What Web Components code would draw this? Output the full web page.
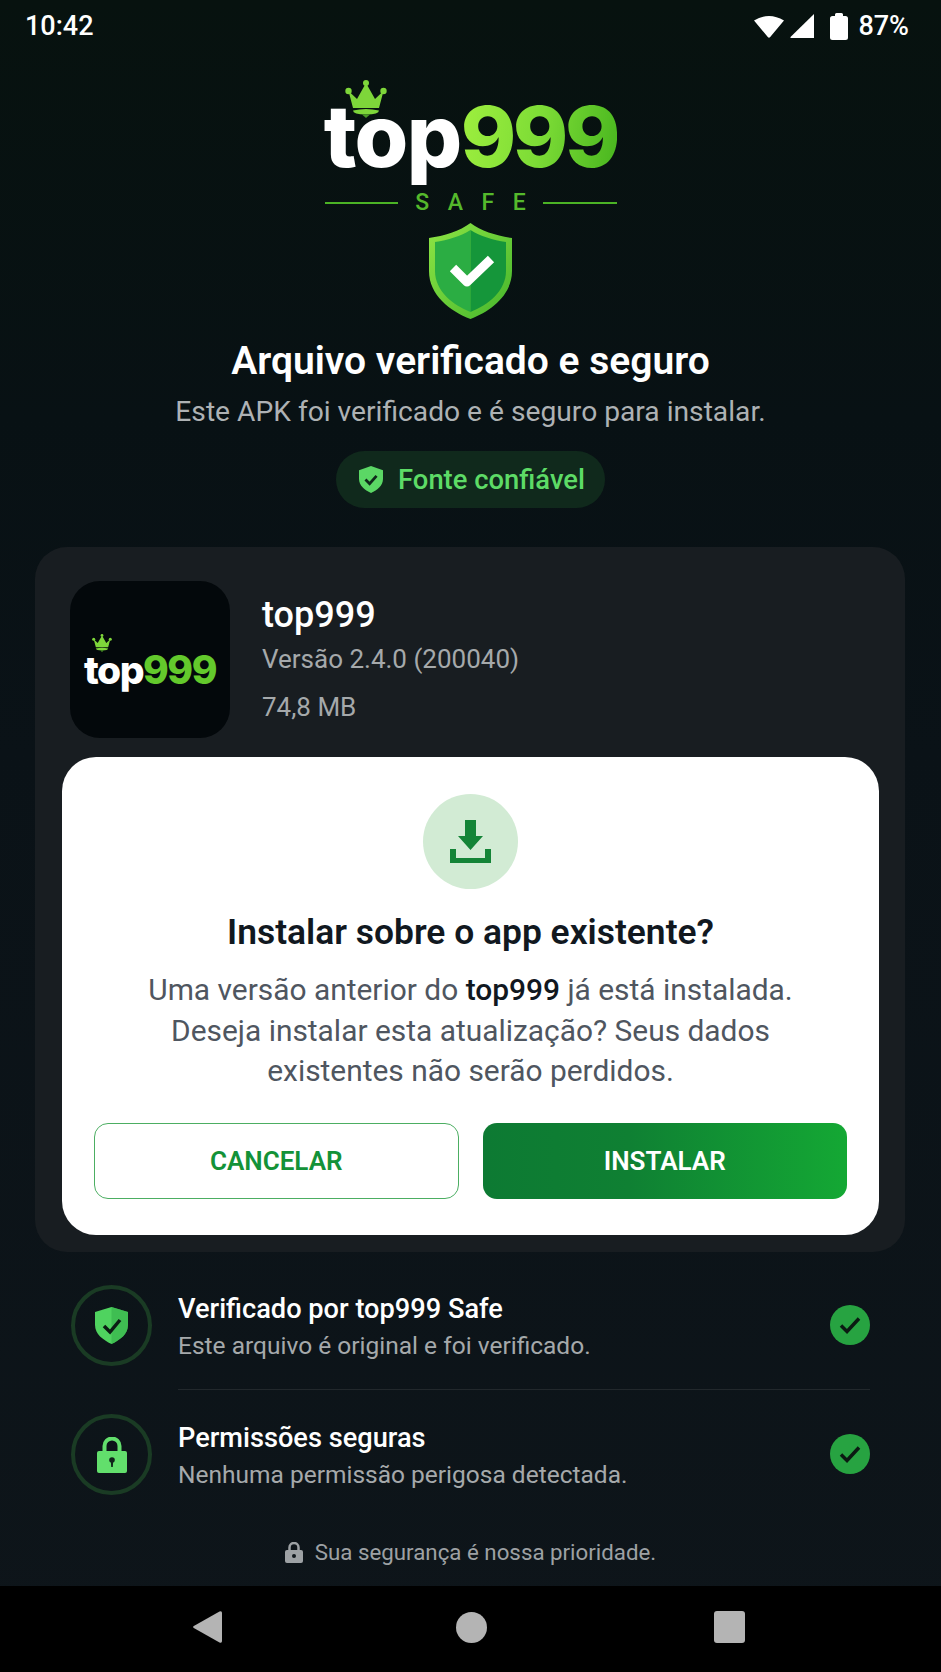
<!DOCTYPE html>
<html lang="pt-BR">
<head>
<meta charset="utf-8">
<title>top999 Safe</title>
<style>
  html, body { margin: 0; padding: 0; background: #0b1216; }
  body { font-family: Roboto, "Noto Sans", sans-serif; }
</style>
</head>
<body>
<install-screen>
  <status-bar time="10:42" level="87%"></status-bar>
  <brand-logo></brand-logo>
  <verified-head heading="Arquivo verificado e seguro" text="Este APK foi verificado e é seguro para instalar."></verified-head>
  <trust-pill>Fonte confiável</trust-pill>
  <app-card name="top999" version="Versão 2.4.0 (200040)" size="74,8 MB">
    <install-dialog heading="Instalar sobre o app existente?">
      Uma versão anterior do <b>top999</b> já está instalada.<br>Deseja instalar esta atualização? Seus dados<br>existentes não serão perdidos.
    </install-dialog>
  </app-card>
  <check-row icon="shield" heading="Verificado por top999 Safe" text="Este arquivo é original e foi verificado." first></check-row>
  <check-row icon="lock" heading="Permissões seguras" text="Nenhuma permissão perigosa detectada." last></check-row>
  <safe-note>Sua segurança é nossa prioridade.</safe-note>
  <nav-bar></nav-bar>
</install-screen>

<script>
const CROWN = `<svg viewBox="0 0 42 38" width="100%" height="100%" fill="#7ed63a" style="display:block">
  <circle cx="3.5" cy="11" r="3.2"/><circle cx="21" cy="3" r="3"/><circle cx="38.5" cy="11" r="3.2"/>
  <path d="M3.5 11 L12 19 L21 3 L30 19 L38.5 11 L34 28 H8 Z"/>
  <path d="M8 30.5 Q21 27.5 34 30.5 Q34 34.5 21 34.5 Q8 34.5 8 30.5 Z"/>
  <path d="M17 34.5 H25 L21 38 Z" fill="#4a9a25"/>
</svg>`;

class InstallScreen extends HTMLElement {
  connectedCallback() {
    this.attachShadow({ mode: 'open' }).innerHTML = `
    <style>
      :host {
        display: flex;
        flex-direction: column;
        height: 1672px;
        width: 941px;
        overflow: hidden;
        color: #fff;
        font-family: Roboto, "Noto Sans", sans-serif;
        background: linear-gradient(180deg, #07120f 0%, #081114 25%, #0a1217 45%, #0e151a 100%);
      }
    </style>
    <slot></slot>`;
  }
}

class StatusBar extends HTMLElement {
  connectedCallback() {
    this.attachShadow({ mode: 'open' }).innerHTML = `
    <style>
      :host { display: flex; align-items: center; justify-content: space-between; height: 52px; padding: 0 32px 0 25px; font-size: 27px; font-weight: 500; color: #fff; }
      .right { display: flex; align-items: center; }
      svg { display: block; }
      .pct { margin-left: 10px; }
    </style>
    <span>${this.getAttribute('time')}</span>
    <div class="right">
      <svg width="30" height="24" viewBox="0 0 30 24" fill="#fff"><path d="M0 6.500 Q15 -2.500 30 6.500 L16.200 23 Q15 24.500 13.800 23 Z"/></svg>
      <svg width="24" height="24" viewBox="0 0 24 24" fill="#fff" style="margin-left:6px"><path d="M24 0 V24 H1 Q0 24 .5 23 Z"/></svg>
      <svg width="18" height="27" viewBox="0 0 18 27" fill="#fff" style="margin-left:16px"><path d="M5 3 V1.500 Q5 0 6.500 0 H11.500 Q13 0 13 1.500 V3 H15.500 Q18 3 18 5.500 V24.500 Q18 27 15.500 27 H2.500 Q0 27 0 24.500 V5.500 Q0 3 2.500 3 Z"/></svg>
      <span class="pct">${this.getAttribute('level')}</span>
    </div>`;
  }
}

class BrandLogo extends HTMLElement {
  connectedCallback() {
    this.attachShadow({ mode: 'open' }).innerHTML = `
    <style>
      :host { display: flex; flex-direction: column; align-items: center; }
      .word { position: relative; margin-top: 28px; height: 112px; display: flex; align-items: baseline; font-family: Inter, Roboto, sans-serif; font-weight: 800; font-size: 87px; letter-spacing: -1.600px; line-height: 112px; color: #fff; }
      .g { font-size: 84px; letter-spacing: -3.400px; background: linear-gradient(100deg, #a0f03f 0%, #7ddc36 50%, #46b41e 100%); -webkit-background-clip: text; background-clip: text; color: transparent; }
      .crown { position: absolute; left: 21px; top: 0; width: 42px; height: 38px; }
      .tag { display: flex; align-items: center; justify-content: center; gap: 17px; width: 292px; margin-top: -1px; color: #55b92c; font-size: 23px; font-weight: 500; line-height: 24px; }
      .tag i { flex: 1; height: 2px; background: #4bb325; }
      .tag span { letter-spacing: 18.500px; margin-right: -18.500px; }
      .shield { display: block; margin-top: 8px; }
    </style>
    <div class="word"><span>top</span><span class="g">999</span><div class="crown">${CROWN}</div></div>
    <div class="tag"><i></i><span>SAFE</span><i></i></div>
    <svg class="shield" width="83" height="96" viewBox="0 0 83 96">
      <defs>
        <linearGradient id="rim" x1="0" y1="0" x2="1" y2="1"><stop offset="0" stop-color="#8ee544"/><stop offset="1" stop-color="#45b52c"/></linearGradient>
      </defs>
      <path fill="url(#rim)" d="M41.5 0 C52 8 68 13 83 15 V48 C83 72 62 88 41.500 96 C21 88 0 72 0 48 V15 C15 13 31 8 41.500 0 Z"/>
      <path fill="#2bad43" d="M41.500 7 C32 13 19 17 6 19 V48 C6 68 24 82 41.500 89 Z"/>
      <path fill="#15963a" d="M41.500 7 C51 13 64 17 77 19 V48 C77 68 59 82 41.500 89 Z"/>
      <path fill="none" stroke="#fff" stroke-width="9" stroke-linejoin="round" d="M24 45 L38 59 L62 36"/>
    </svg>`;
  }
}

class VerifiedHead extends HTMLElement {
  connectedCallback() {
    this.attachShadow({ mode: 'open' }).innerHTML = `
    <style>
      :host { display: block; text-align: center; margin-top: 19px; }
      h1 { margin: 0; font-size: 39px; line-height: 46px; font-weight: 600; color: #fff; }
      p { margin: 10px 0 0; font-size: 28.200px; line-height: 36px; color: #aeb2b4; }
    </style>
    <h1>${this.getAttribute('heading')}</h1>
    <p>${this.getAttribute('text')}</p>`;
  }
}

class TrustPill extends HTMLElement {
  connectedCallback() {
    this.attachShadow({ mode: 'open' }).innerHTML = `
    <style>
      :host { display: flex; align-items: center; align-self: center; gap: 15px; height: 57px; box-sizing: border-box; margin-top: 21px; padding: 0 20px 0 23px; border-radius: 29px; background: #10291c; color: #5ddb66; font-size: 27.400px; font-weight: 500; }
      svg { display: block; }
    </style>
    <svg width="24" height="27" viewBox="0 0 26 29">
      <path fill="#5bd765" d="M13 0 L26 4.500 V14 C26 21 20 26 13 29 C6 26 0 21 0 14 V4.500 Z"/>
      <path fill="none" stroke="#10291c" stroke-width="3" d="M7 14.500 L11.500 19 L19 10.500"/>
    </svg>
    <span><slot></slot></span>`;
  }
}

class AppCard extends HTMLElement {
  connectedCallback() {
    this.attachShadow({ mode: 'open' }).innerHTML = `
    <style>
      :host { display: block; flex: none; margin: 39px 36px 0 35px; padding: 34px 26px 17px 27px; border-radius: 32px; background: #181d21; }
      .top { display: flex; align-items: stretch; padding-left: 8px; }
      .icon { position: relative; flex: none; width: 160px; height: 157px; border-radius: 30px; background: #03080b; display: flex; align-items: center; justify-content: center; font-family: Inter, Roboto, sans-serif; font-weight: 800; font-size: 39px; letter-spacing: -1.500px; padding-top: 20px; box-sizing: border-box; color: #fff; }
      .icon b { font-weight: 800; color: #63c92c; }
      .crown { position: absolute; left: 22px; top: 53px; width: 20px; height: 18px; }
      .meta { margin-left: 32px; }
      h2 { margin: 15px 0 0; font-size: 36px; line-height: 39px; font-weight: 500; color: #fff; }
      .l { font-size: 26px; line-height: 48px; color: #a5a9ab; }
      ::slotted(install-dialog) { margin-top: 19px; }
    </style>
    <div class="top">
      <div class="icon"><div class="crown">${CROWN}</div><span>top<b>999</b></span></div>
      <div class="meta">
        <h2>${this.getAttribute('name')}</h2>
        <div class="l">${this.getAttribute('version')}</div>
        <div class="l">${this.getAttribute('size')}</div>
      </div>
    </div>
    <slot></slot>`;
  }
}

class InstallDialog extends HTMLElement {
  connectedCallback() {
    this.attachShadow({ mode: 'open' }).innerHTML = `
    <style>
      :host { display: block; box-sizing: border-box; height: 478px; padding: 37px 32px 0; border-radius: 34px; background: #fff; text-align: center; }
      .badge { width: 95px; height: 95px; margin: 0 auto; border-radius: 50%; background: #d2ebd4; display: flex; align-items: center; justify-content: center; }
      svg { display: block; }
      h3 { margin: 21px 0 0; font-size: 35.400px; line-height: 44px; font-weight: 600; color: #11181f; }
      p { margin: 16px -10px 0; font-size: 29.900px; line-height: 40.500px; color: #4f5660; }
      ::slotted(b) { font-weight: 500; color: #11181f; }
      .btns { display: grid; grid-template-columns: 1fr 1fr; gap: 24px; margin-top: 31px; }
      .btn { height: 76px; box-sizing: border-box; border-radius: 14px; display: flex; align-items: center; justify-content: center; font-size: 26px; font-weight: 600; }
      .no { border: 1.500px solid #4cae62; color: #139238; }
      .yes { background: linear-gradient(90deg, #0d7a33 0%, #0f8033 40%, #14a834 100%); color: #fff; }
    </style>
    <div class="badge">
      <svg width="41" height="43" viewBox="0 0 41 43" fill="#148437">
        <path d="M15 0 H26 V16 H33 L20.500 30 L8 16 H15 Z"/>
        <path d="M0 29 H6 V38 H35 V29 H41 V43 H0 Z"/>
      </svg>
    </div>
    <h3>${this.getAttribute('heading')}</h3>
    <p><slot></slot></p>
    <div class="btns"><div class="btn no">CANCELAR</div><div class="btn yes">INSTALAR</div></div>`;
  }
}

class CheckRow extends HTMLElement {
  connectedCallback() {
    const glyph = this.getAttribute('icon') === 'lock'
      ? `<svg width="30" height="36" viewBox="0 0 30 36"><path fill="none" stroke="#62df6c" stroke-width="4" d="M7.500 16 V9 A7.500 7.500 0 0 1 22.500 9 V16"/><rect y="14" width="30" height="22" rx="2" fill="#62df6c"/><circle cx="15" cy="23" r="2.800" fill="#10241a"/><path d="M13.800 24 H16.200 L15.800 30 H14.200 Z" fill="#10241a"/></svg>`
      : `<svg width="33" height="37" viewBox="0 0 33 37"><path fill="#4fd35f" d="M16.500 0 L33 5 V18 C33 27 25 33 16.500 37 C8 33 0 27 0 18 V5 Z"/><path fill="#36b04a" d="M16.500 0 L33 5 V18 C33 27 25 33 16.500 37 Z" opacity=".6"/><path fill="none" stroke="#0c1c14" stroke-width="3.500" d="M9 19 L15 25 L25 13"/></svg>`;
    this.attachShadow({ mode: 'open' }).innerHTML = `
    <style>
      :host { display: flex; flex: none; align-items: center; margin: 0 71px 0 71px; }
      :host([first]) { margin-top: 9px; }
      .ring { flex: none; width: 81px; height: 81px; box-sizing: border-box; border: 4px solid #1a3b24; border-radius: 50%; display: flex; align-items: center; justify-content: center; }
      svg { display: block; }
      .body { flex: 1; display: flex; align-items: center; margin-left: 26px; height: 129px; box-sizing: border-box; border-bottom: 1px solid #22282c; }
      :host([last]) .body { border-bottom-color: transparent; }
      .txt { flex: 1; padding-top: 6px; }
      .t { font-size: 27.200px; line-height: 34px; font-weight: 500; color: #fff; }
      .s { margin-top: 2px; font-size: 24.500px; line-height: 36px; color: #a5a9ab; }
      .ok { flex: none; width: 40px; height: 40px; border-radius: 50%; background: #27a341; display: flex; align-items: center; justify-content: center; }
    </style>
    <div class="ring">${glyph}</div>
    <div class="body">
      <div class="txt"><div class="t">${this.getAttribute('heading')}</div><div class="s">${this.getAttribute('text')}</div></div>
      <div class="ok"><svg width="22" height="18" viewBox="0 0 22 18"><path fill="none" stroke="#0b1a12" stroke-width="3.500" d="M2 9.500 L8 15.500 L20 2.500"/></svg></div>
    </div>`;
  }
}

class SafeNote extends HTMLElement {
  connectedCallback() {
    this.attachShadow({ mode: 'open' }).innerHTML = `
    <style>
      :host { display: flex; align-items: center; justify-content: center; gap: 12px; margin-top: auto; height: 32px; margin-bottom: 18px; font-size: 22.300px; color: #9da1a4; }
      svg { display: block; }
    </style>
    <svg width="18" height="21" viewBox="0 0 18 21"><path fill="none" stroke="#9da1a4" stroke-width="2.500" d="M4.500 9 V5.500 A4.500 4.500 0 0 1 13.500 5.500 V9"/><rect y="8" width="18" height="13" rx="2" fill="#9da1a4"/><circle cx="9" cy="14" r="2" fill="#10171c"/></svg>
    <span><slot></slot></span>`;
  }
}

class NavBar extends HTMLElement {
  connectedCallback() {
    this.attachShadow({ mode: 'open' }).innerHTML = `
    <style>
      :host { display: flex; align-items: center; justify-content: center; flex: none; height: 86px; background: #000; padding: 0 3px 4px 0; box-sizing: border-box; gap: 227.500px; }
      svg { display: block; }
      .back { margin-right: 6px; }
    </style>
    <svg class="back" width="29" height="32" viewBox="0 0 29 32" fill="#b4b4b4"><path d="M.8 15 L26.500 .500 Q29 -.500 29 2 V30 Q29 32.500 26.500 31.500 L.8 17 Q-.6 16 .8 15 Z"/></svg>
    <svg width="31" height="31" viewBox="0 0 31 31" fill="#b4b4b4"><circle cx="15.500" cy="15.500" r="15.500"/></svg>
    <svg width="31" height="32" viewBox="0 0 31 32" fill="#b4b4b4"><rect width="31" height="32" rx="3"/></svg>`;
  }
}

customElements.define('install-screen', InstallScreen);
customElements.define('status-bar', StatusBar);
customElements.define('brand-logo', BrandLogo);
customElements.define('verified-head', VerifiedHead);
customElements.define('trust-pill', TrustPill);
customElements.define('app-card', AppCard);
customElements.define('install-dialog', InstallDialog);
customElements.define('check-row', CheckRow);
customElements.define('safe-note', SafeNote);
customElements.define('nav-bar', NavBar);
</script>
</body>
</html>
